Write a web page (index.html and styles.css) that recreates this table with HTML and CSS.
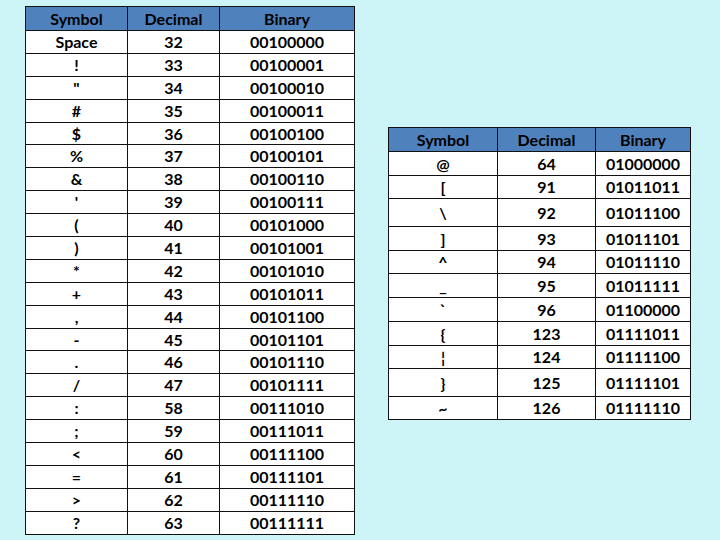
FILE: index.html
```html
<!DOCTYPE html>
<html>
<head>
<meta charset="utf-8">
<link rel="stylesheet" href="styles.css">
</head>
<body>
<div class="page">
  <table class="ascii left">
    <colgroup><col class="c1"><col class="c2"><col class="c3"></colgroup>
    <thead><tr><th>Symbol</th><th>Decimal</th><th>Binary</th></tr></thead>
    <tbody>
      <tr><td>Space</td><td>32</td><td>00100000</td></tr>
      <tr><td>!</td><td>33</td><td>00100001</td></tr>
      <tr><td>"</td><td>34</td><td>00100010</td></tr>
      <tr><td>#</td><td>35</td><td>00100011</td></tr>
      <tr><td>$</td><td>36</td><td>00100100</td></tr>
      <tr><td>%</td><td>37</td><td>00100101</td></tr>
      <tr><td>&amp;</td><td>38</td><td>00100110</td></tr>
      <tr><td>'</td><td>39</td><td>00100111</td></tr>
      <tr><td>(</td><td>40</td><td>00101000</td></tr>
      <tr><td>)</td><td>41</td><td>00101001</td></tr>
      <tr><td>*</td><td>42</td><td>00101010</td></tr>
      <tr><td>+</td><td>43</td><td>00101011</td></tr>
      <tr><td>,</td><td>44</td><td>00101100</td></tr>
      <tr><td>-</td><td>45</td><td>00101101</td></tr>
      <tr><td>.</td><td>46</td><td>00101110</td></tr>
      <tr><td>/</td><td>47</td><td>00101111</td></tr>
      <tr><td>:</td><td>58</td><td>00111010</td></tr>
      <tr><td>;</td><td>59</td><td>00111011</td></tr>
      <tr><td>&lt;</td><td>60</td><td>00111100</td></tr>
      <tr><td>=</td><td>61</td><td>00111101</td></tr>
      <tr><td>&gt;</td><td>62</td><td>00111110</td></tr>
      <tr><td>?</td><td>63</td><td>00111111</td></tr>
    </tbody>
  </table>
  <table class="ascii right">
    <colgroup><col class="r1"><col class="r2"><col class="r3"></colgroup>
    <thead><tr><th>Symbol</th><th>Decimal</th><th>Binary</th></tr></thead>
    <tbody>
      <tr><td>@</td><td>64</td><td>01000000</td></tr>
      <tr class="short"><td>[</td><td>91</td><td>01011011</td></tr>
      <tr class="tall"><td>\</td><td>92</td><td>01011100</td></tr>
      <tr><td>]</td><td>93</td><td>01011101</td></tr>
      <tr class="short"><td>^</td><td>94</td><td>01011110</td></tr>
      <tr><td>_</td><td>95</td><td>01011111</td></tr>
      <tr><td>`</td><td>96</td><td>01100000</td></tr>
      <tr><td>{</td><td>123</td><td>01111011</td></tr>
      <tr class="short"><td>¦</td><td>124</td><td>01111100</td></tr>
      <tr class="tall"><td>}</td><td>125</td><td>01111101</td></tr>
      <tr class="short"><td>~</td><td>126</td><td>01111110</td></tr>
    </tbody>
  </table>
</div>
</body>
</html>
```
FILE: styles.css
```css
html, body {
  margin: 0;
  padding: 0;
  background: #cdf5f7;
}
.page {
  display: flex;
  align-items: flex-start;
  gap: 33px;
  padding: 6px 0 0 25px;
  width: 720px;
  height: 540px;
  box-sizing: border-box;
}
.ascii {
  border-collapse: collapse;
  table-layout: fixed;
  background: #ffffff;
  font-family: Lato, "Open Sans", sans-serif;
  font-weight: 700;
  font-size: 16px;
  color: #000;
}
.ascii th, .ascii td {
  border: 1px solid #111;
  padding: 0;
  text-align: center;
  vertical-align: middle;
  line-height: 1;
}
.ascii th {
  background: #4f81bd;
  font-weight: 700;
  color: #000;
}
.left { width: 330px; }
.left .c1 { width: 102px; }
.left .c2 { width: 92px; }
.left .c3 { width: 135px; }
.left tr { height: 22.9px; }
.left thead tr { height: 24px; }

.right { width: 302px; margin-top: 121px; }
.right .r1 { width: 109px; }
.right .r2 { width: 98px; }
.right .r3 { width: 95px; }
.right tr { height: 24px; }
.right tr.short { height: 23px; }
.right tr.tall { height: 28px; }
```
